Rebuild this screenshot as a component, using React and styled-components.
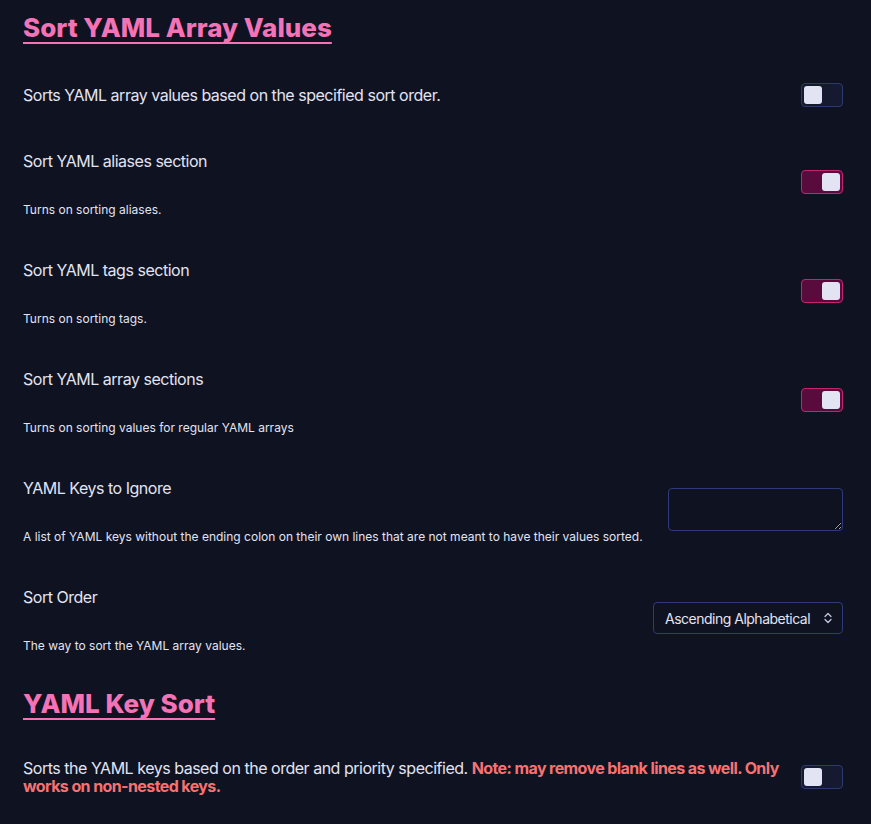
import React from 'react';
import styled, { createGlobalStyle } from 'styled-components';

const GlobalStyle = createGlobalStyle`
  html, body {
    margin: 0;
    padding: 0;
    background: #0f1221;
  }
  body {
    font-family: Inter, "Noto Sans", sans-serif;
    color: #e2e4f3;
  }
`;

const settings = [
  {
    name: 'Sort YAML aliases section',
    desc: 'Turns on sorting aliases.',
    on: true,
  },
  {
    name: 'Sort YAML tags section',
    desc: 'Turns on sorting tags.',
    on: true,
  },
  {
    name: 'Sort YAML array sections',
    desc: 'Turns on sorting values for regular YAML arrays',
    on: true,
  },
];

const App = () => {
  return (
    <Page>
      <GlobalStyle />
      <Section>
        <Heading>Sort YAML Array Values</Heading>
        <Row>
          <Info>
            <Lead>Sorts YAML array values based on the specified sort order.</Lead>
          </Info>
          <Toggle />
        </Row>
        {settings.map((s) => (
          <Row key={s.name}>
            <Info>
              <Name>{s.name}</Name>
              <Desc>{s.desc}</Desc>
            </Info>
            <Toggle on={s.on} lift />
          </Row>
        ))}
        <Row>
          <Info>
            <Name>YAML Keys to Ignore</Name>
            <Desc>
              A list of YAML keys without the ending colon on their own lines that are not meant to have their values sorted.
            </Desc>
          </Info>
          <TextArea />
        </Row>
        <Row>
          <Info>
            <Name>Sort Order</Name>
            <Desc>The way to sort the YAML array values.</Desc>
          </Info>
          <Select>
            <span>Ascending Alphabetical</span>
            <svg width="10" height="14" viewBox="0 0 10 14" fill="none" stroke="#c9cbe0" strokeWidth="1.2" strokeLinecap="round" strokeLinejoin="round">
              <path d="M2 5.5 L5 2.5 L8 5.5" />
              <path d="M2 8.5 L5 11.5 L8 8.5" />
            </svg>
          </Select>
        </Row>
      </Section>
      <Section>
        <Heading>YAML Key Sort</Heading>
        <Row>
          <Info>
            <Lead>
              Sorts the YAML keys based on the order and priority specified.{' '}
              <Note>Note: may remove blank lines as well. Only works on non-nested keys.</Note>
            </Lead>
          </Info>
          <Toggle />
        </Row>
      </Section>
    </Page>
  );
};

export default App;

const Toggle = ({ on, lift }) => (
  <ToggleTrack $on={on} $lift={lift}>
    <Knob />
  </ToggleTrack>
);

const Page = styled.div`
  display: flex;
  flex-direction: column;
  gap: 42px;
  padding: 18px 28px 40px 23px;
`;

const Section = styled.section`
  display: flex;
  flex-direction: column;
  gap: 45px;
`;

const Heading = styled.h2`
  margin: 0;
  font-size: 26px;
  line-height: 20px;
  font-weight: 800;
  color: #f472b6;
  text-decoration: underline;
  text-decoration-thickness: 2px;
  text-underline-offset: 5px;
`;

const Row = styled.div`
  display: flex;
  align-items: center;
  gap: 12px;
`;

const Info = styled.div`
  flex: 1;
  display: flex;
  flex-direction: column;
`;

const Lead = styled.div`
  font-size: 16px;
  line-height: 18px;
  letter-spacing: -0.48px;
`;

const Name = styled.div`
  font-size: 16px;
  line-height: 18px;
  letter-spacing: -0.48px;
`;

const Desc = styled.div`
  margin-top: 34px;
  font-size: 12px;
  line-height: 12px;
`;

const Note = styled.span`
  color: #f87171;
  font-weight: 700;
  letter-spacing: -0.6px;
`;

const ToggleTrack = styled.div`
  flex: none;
  box-sizing: border-box;
  width: 42px;
  height: 24px;
  margin-bottom: ${(p) => (p.$lift ? '4px' : '0')};
  padding: 2px;
  border-radius: 4px;
  border: 1px solid ${(p) => (p.$on ? '#c2256f' : '#2c3a6e')};
  background: ${(p) => (p.$on ? '#5a0b3d' : '#151a30')};
  display: flex;
  justify-content: ${(p) => (p.$on ? 'flex-end' : 'flex-start')};
`;

const Knob = styled.div`
  width: 18px;
  height: 18px;
  border-radius: 3px;
  background: #e2e4f3;
`;

const TextArea = styled.textarea`
  flex: none;
  box-sizing: border-box;
  width: 175px;
  height: 43px;
  margin-bottom: 4px;
  background: transparent;
  border: 1px solid #2e3a7c;
  border-radius: 4px;
  color: #e2e4f3;
  font-family: inherit;
`;

const Select = styled.div`
  flex: none;
  box-sizing: border-box;
  width: 190px;
  height: 32px;
  margin-bottom: 4px;
  display: flex;
  align-items: center;
  justify-content: space-between;
  padding: 0 9px 0 11px;
  border: 1px solid #2e3a7c;
  border-radius: 4px;
  font-size: 14px;
  letter-spacing: -0.5px;
  color: #e2e4f3;
`;
